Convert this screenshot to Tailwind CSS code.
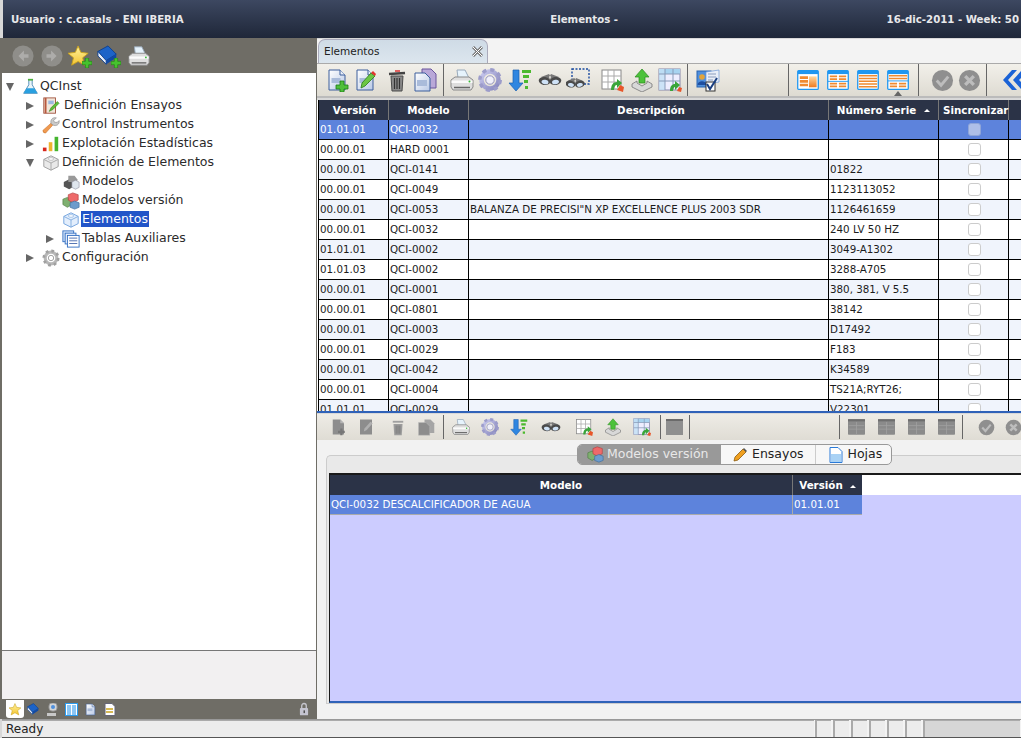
<!DOCTYPE html>
<html lang="en">
<head>
<meta charset="UTF-8">
<title>QCInst - Elementos</title>
<script src="https://cdn.jsdelivr.net/npm/@tailwindcss/browser@4"></script>
</head>
<body class="relative w-[1021px] h-[738px] overflow-hidden bg-[#d8d8d8] font-['DejaVu_Sans',sans-serif] text-[#222]">

<!-- shared icons, kept rendered (not display:none) so the gradients resolve -->
<svg class="absolute w-0 h-0" xmlns="http://www.w3.org/2000/svg">
  <defs>
    <linearGradient id="page" x1="0" y1="0" x2="1" y2="1"><stop offset="0" stop-color="#fff"/><stop offset="1" stop-color="#b9c9e6"/></linearGradient>
    <linearGradient id="orange" x1="0" y1="0" x2="0" y2="1"><stop offset="0" stop-color="#ffd9a0"/><stop offset="1" stop-color="#f07a20"/></linearGradient>
    <linearGradient id="lav" x1="0" y1="0" x2="1" y2="1"><stop offset="0" stop-color="#c9c9ee"/><stop offset="1" stop-color="#8686bc"/></linearGradient>
    <linearGradient id="gold" x1="0" y1="0" x2="0" y2="1"><stop offset="0" stop-color="#fff3a0"/><stop offset="1" stop-color="#f4c430"/></linearGradient>
    <symbol id="doc" viewBox="0 0 24 24"><path d="M4 2h11l5 5v15H4z" fill="url(#page)" stroke="#3c5f9c"/><path d="M15 2v5h5" fill="#e8eef8" stroke="#3c5f9c"/><rect x="6.500" y="10" width="9" height="5" fill="#a9bbda"/></symbol>
    <symbol id="docnew" viewBox="0 0 24 24"><use href="#doc"/><path d="M15 13h4v4h4v4h-4v3h-4v-3h-4v-4h4z" fill="#4fbf3a" stroke="#1d7d14" stroke-width=".8"/></symbol>
    <symbol id="docedit" viewBox="0 0 24 24"><use href="#doc"/><path d="M8 20l1-5L18 5l4 3-10 10z" fill="#6cc644" stroke="#2a7a18" stroke-width=".8"/><path d="M18 5l2-2 3 3-1 2z" fill="#e2342c"/></symbol>
    <symbol id="trash" viewBox="0 0 24 24"><path d="M4 6l16-1" stroke="#444" stroke-width="2.500"/><path d="M10 3h5" stroke="#d33" stroke-width="1.500"/><path d="M6 8h12l-1 15H7z" fill="#8a8a8a" stroke="#4a4a4a"/><path d="M9.500 10v11M12 10v11M14.500 10v11" stroke="#333" stroke-width="1.200"/></symbol>
    <symbol id="copy" viewBox="0 0 24 24"><path d="M9 1h9l5 5v14H9z" fill="#b9a8d8" stroke="#6b559c"/><path d="M2 5h10l5 5v13H2z" fill="url(#page)" stroke="#3c5f9c"/><rect x="4" y="12" width="10" height="6" fill="#a9bbda"/></symbol>
    <symbol id="gdoc" viewBox="0 0 24 24"><path d="M5 2h10l5 5v15H5z" fill="#8d8d8d"/><path d="M15 2v5h5z" fill="#b5b5b5"/><path d="M15 14h3v3h3v3h-3v3h-3v-3h-3v-3h3z" fill="#777"/></symbol>
    <symbol id="gedit" viewBox="0 0 24 24"><path d="M4 2h16v20H4z" fill="#8d8d8d"/><path d="M9 18l1-4 8-9 3 2-8 9z" fill="#b0b0b0"/></symbol>
    <symbol id="gtrash" viewBox="0 0 24 24"><path d="M5 5h14" stroke="#a0a0a0" stroke-width="2.500"/><path d="M6 8h12l-1 15H7z" fill="#9c9c9c"/><path d="M9.500 10v11M12 10v11M14.500 10v11" stroke="#777" stroke-width="1.200"/></symbol>
    <symbol id="gcopy" viewBox="0 0 24 24"><path d="M10 2h8l5 5v13H10z" fill="#a5a5a5"/><path d="M2 6h10l5 5v12H2z" fill="#8d8d8d" stroke="#bbb" stroke-width=".6"/></symbol>
    <symbol id="glay" viewBox="0 0 24 22"><rect width="24" height="22" rx="1" fill="#8b8b8b"/><rect width="24" height="3" fill="#6e6e6e"/><path d="M1 9h22M1 14h22M12 4v17" stroke="#a2a2a2"/></symbol>
    <symbol id="printer" viewBox="0 0 24 24"><path d="M7 2h8l4 8H8z" fill="#e6f3fc" stroke="#9ab"/><path d="M1 12l4-3h14l4 3v7l-2 3H3l-2-3z" fill="#dedede" stroke="#8a8a8a"/><path d="M1.500 12.500h21V15h-21z" fill="#fbfbfb"/><path d="M4 19.500h16" stroke="#666" stroke-width="1.500"/><circle cx="19.500" cy="13.500" r="1" fill="#3b3"/></symbol>
    <symbol id="gear" viewBox="0 0 24 24"><circle cx="12" cy="12" r="8.500" fill="none" stroke="url(#lav)" stroke-width="4.500"/><circle cx="12" cy="12" r="10.200" fill="none" stroke="#9c9cca" stroke-width="3.500" stroke-dasharray="4 4"/><circle cx="12" cy="12" r="4.200" fill="#f0f0fa" stroke="#8080b0" stroke-width=".8"/></symbol>
    <symbol id="sort" viewBox="0 0 24 24"><path d="M5 2h6v13h4l-7 8-7-8h4z" fill="#2f86e0" stroke="#1a5fb0" stroke-width=".7"/><path d="M14 2h9v3h-9zM15 7h6v3h-6zM16 12h4v3h-4zM17 18h3v3h-3z" fill="#4cb92f"/></symbol>
    <symbol id="binoc" viewBox="0 0 24 24"><path d="M3 9l8-3 2 3-2 5zM21 9l-8-3-2 3 2 5z" fill="#777"/><ellipse cx="6.500" cy="13" rx="5.800" ry="4" fill="#4a4a4a" transform="rotate(12 6.500 13)"/><ellipse cx="17.500" cy="13" rx="5.800" ry="4" fill="#4a4a4a" transform="rotate(-12 17.500 13)"/><ellipse cx="7" cy="14" rx="3.500" ry="2.200" fill="#cfe2f6" transform="rotate(12 7 14)"/><ellipse cx="17.500" cy="14" rx="3.500" ry="2.200" fill="#cfe2f6" transform="rotate(-12 17.500 14)"/></symbol>
    <symbol id="binocsel" viewBox="0 0 24 24"><rect x="6" y="1" width="17" height="15" fill="none" stroke="#1a4aa0" stroke-width="1.400" stroke-dasharray="2 1.500"/><g transform="translate(-1 5) scale(.85)"><use href="#binoc" width="24" height="24"/></g></symbol>
    <symbol id="grid" viewBox="0 0 24 24"><rect x="2" y="2" width="19" height="19" fill="#fff" stroke="#888"/><path d="M2 8h19M2 14h19M8 2v19M14 2v19" stroke="#aaa"/><path d="M11 22c0-5 2-8 6-8v-3l5 4-5 5v-3c-2 0-3 2-3 5z" fill="#3aa53a"/><path d="M17 22l3-5 4 2-1 5z" fill="#e8562a"/></symbol>
    <symbol id="grid2" viewBox="0 0 24 24"><rect x="1" y="1" width="21" height="21" fill="#eef" stroke="#88a"/><rect x="1" y="1" width="21" height="5" fill="#a7d3f0"/><rect x="1" y="1" width="6" height="21" fill="#c3e0f5" opacity=".8"/><path d="M1 6h21M1 13h21M7 1v21M15 1v21" stroke="#889bb8"/><path d="M12 23c0-5 2-7 5-7v-3l5 4-5 5v-3c-1 0-2 2-2 4z" fill="#3aa53a"/><path d="M19 23l2-4 3 1-1 4z" fill="#e8562a"/></symbol>
    <symbol id="upload" viewBox="0 0 24 24"><path d="M12 1l7 8h-4v6H9V9H5z" fill="#4cc23a" stroke="#2a8a1e" stroke-width=".7"/><path d="M2 16l5-3v2l5 3 5-3v-2l5 3v3l-10 5-10-5z" fill="#d8d8d8" stroke="#777" stroke-width=".8"/></symbol>
    <symbol id="usercheck" viewBox="0 0 24 24"><rect x="1" y="3" width="14" height="16" fill="#4f8fdc" stroke="#2a64b0"/><path d="M10 4l13-2v12l-13 2z" fill="#e8eef8" stroke="#6f9ad8" stroke-width=".7"/><path d="M12 6h8M12 9h8M12 12h5" stroke="#8a9cbc"/><circle cx="6" cy="9" r="2.800" fill="#e2a43a"/><path d="M1.500 17c0-5 9-5 9 0z" fill="#1f4fa0"/><rect x="10" y="14" width="9" height="9" fill="#fff" stroke="#333"/><path d="M11 16l3 5 7-11" fill="none" stroke="#1a3f80" stroke-width="2"/></symbol>
    <symbol id="lay1" viewBox="0 0 24 22"><rect x=".7" y=".7" width="22.600" height="20.600" rx="1" fill="#fff" stroke="#1f96f0" stroke-width="1.400"/><rect x="1" y="1" width="22" height="3.500" fill="#1f96f0"/><path d="M3 7h9v3H3zM3 11h9v3H3zM3 15h9v3H3z" fill="#f08a30"/><rect x="13" y="7" width="8.500" height="12" fill="url(#orange)"/></symbol>
    <symbol id="lay2" viewBox="0 0 24 22"><rect x=".7" y=".7" width="22.600" height="20.600" rx="1" fill="#fff" stroke="#1f96f0" stroke-width="1.400"/><rect x="1" y="1" width="22" height="3.500" fill="#1f96f0"/><path d="M3 6h8v2H3zM13 6h8v2h-8zM3 9h8v2H3zM13 9h8v2h-8z" fill="#f08a30"/><path d="M1 12.500h22" stroke="#1f96f0"/><path d="M3 14h8v2H3zM13 14h8v2h-8zM3 17h8v2H3zM13 17h8v2h-8z" fill="#f08a30"/></symbol>
    <symbol id="lay3" viewBox="0 0 24 22"><rect x=".7" y=".7" width="22.600" height="20.600" rx="1" fill="#fff" stroke="#1f96f0" stroke-width="1.400"/><rect x="1" y="1" width="22" height="3.500" fill="#1f96f0"/><path d="M2 5.500h20v1.700H2zM2 8.500h20v1.700H2zM2 11.500h20v1.700H2zM2 14.500h20v1.700H2zM2 17.500h20v1.700H2z" fill="#f08a30"/></symbol>
    <symbol id="lay4" viewBox="0 0 24 22"><rect x=".7" y=".7" width="22.600" height="20.600" rx="1" fill="#fff" stroke="#1f96f0" stroke-width="1.400"/><rect x="1" y="1" width="22" height="3.500" fill="#1f96f0"/><path d="M2 5.500h20v1.700H2zM2 8.500h20v1.700H2z" fill="#f08a30"/><path d="M1 12h22" stroke="#1f96f0"/><path d="M3 14h8v2H3zM13 14h8v2h-8zM3 17h8v2H3zM13 17h8v2h-8z" fill="#f08a30"/></symbol>
    <symbol id="ok" viewBox="0 0 24 24"><circle cx="12" cy="12" r="11" fill="#8f8f8f"/><path d="M6 12l4.500 5L18 8" fill="none" stroke="#bdbdbd" stroke-width="3"/></symbol>
    <symbol id="no" viewBox="0 0 24 24"><circle cx="12" cy="12" r="11" fill="#8f8f8f"/><path d="M7.500 7.500l9 9M16.500 7.500l-9 9" stroke="#bdbdbd" stroke-width="3.500"/></symbol>
    <symbol id="chev" viewBox="0 0 24 24"><path d="M11 2L2 12l9 10h5L7 12l9-10zM21 2l-9 10 9 10h3v-4l-6-6 6-6V2z" fill="#1a62d6"/></symbol>
    <symbol id="cube" viewBox="0 0 20 20"><path d="M10 2l8 4v8l-8 4-8-4V6z" fill="#e9e9e9" stroke="#9a9a9a"/><path d="M2 6l8 4 8-4M10 10v8" fill="none" stroke="#a5a5a5"/><ellipse cx="10" cy="5.500" rx="3" ry="1.500" fill="#fff" stroke="#aaa" stroke-width=".7"/></symbol>
    <symbol id="cubeblue" viewBox="0 0 20 20"><path d="M10 2l8 4v8l-8 4-8-4V6z" fill="#e3eefc" stroke="#6d9fdc"/><path d="M2 6l8 4 8-4M10 10v8" fill="none" stroke="#7fabdf"/><ellipse cx="10" cy="5.500" rx="3" ry="1.500" fill="#fff" stroke="#7fabdf" stroke-width=".7"/></symbol>
    <symbol id="cubes" viewBox="0 0 20 20"><path d="M1 8l5-2 5 2v6l-5 3-5-3z" fill="#7fb070" stroke="#4c7a40" stroke-width=".7"/><path d="M7 3l5-2 6 2v6l-6 3-5-3z" fill="#ee6a6a" stroke="#b03c3c" stroke-width=".7"/><path d="M9 12l5-2 5 2v5l-5 2-5-2z" fill="#6d9ccc" stroke="#3d6a9a" stroke-width=".7"/></symbol>
    <symbol id="flask" viewBox="0 0 20 20"><path d="M8 2h4v6l6 10H2L8 8z" fill="#eaf6fb" stroke="#3e7fb0"/><path d="M5.500 12h9l3.500 6H2z" fill="#29a0e0"/><path d="M7 2h6" stroke="#4cae3a" stroke-width="2"/></symbol>
    <symbol id="notebook" viewBox="0 0 20 20"><rect x="2" y="1" width="13" height="17" fill="#f2e6da" stroke="#a0523c"/><path d="M4 1v17" stroke="#b9573c" stroke-width="2"/><rect x="7" y="4" width="6" height="4" fill="#9db8e0"/><path d="M8 16l2-4 7-7 2 2-7 7z" fill="#5fbe34" stroke="#2c7a18" stroke-width=".6"/></symbol>
    <symbol id="wrench" viewBox="0 0 20 20"><path d="M1 16l9-8 2 2-8 9q-3 0-3-3z" fill="#f09a50" stroke="#c66a20" stroke-width=".6"/><path d="M10 8c-1-4 2-7 6-6l-3 3 1 2 3 0 2-2c1 4-3 7-7 5z" fill="#c9c9c9" stroke="#808080" stroke-width=".6"/></symbol>
    <symbol id="bars" viewBox="0 0 20 20"><rect x="1" y="14" width="4" height="4" fill="#d8261c"/><rect x="7.500" y="8" width="4" height="10" fill="#eeb32f"/><rect x="14" y="2" width="4" height="16" fill="#45b52e"/></symbol>
    <symbol id="treegear" viewBox="0 0 20 20"><circle cx="10" cy="10" r="6.500" fill="none" stroke="#b8b8b8" stroke-width="3.500"/><circle cx="10" cy="10" r="8" fill="none" stroke="#a0a0a0" stroke-width="3" stroke-dasharray="3 3.300"/><circle cx="10" cy="10" r="3" fill="#fff" stroke="#999"/></symbol>
    <symbol id="models" viewBox="0 0 20 20"><path d="M2 10l6-3 5 3v5l-5 3-6-3z" fill="#555"/><path d="M7 3h7l3 4v3H7z" fill="#999"/><path d="M11 10l4-2 4 2v6l-4 2-4-2z" fill="#dfe6ee" stroke="#889" stroke-width=".6"/></symbol>
    <symbol id="tables" viewBox="0 0 20 20"><rect x="1" y="1" width="12" height="12" fill="#d6e6fa" stroke="#2f6cc0"/><rect x="3.500" y="3.500" width="12" height="12" fill="#e7f0fc" stroke="#2f6cc0"/><rect x="6" y="6" width="13" height="13" fill="#fff" stroke="#2f6cc0"/><path d="M8 9h9M8 12h9M8 15h9" stroke="#46a" /></symbol>
    <symbol id="star" viewBox="0 0 24 24"><path d="M11 1l3 7 8 1-6 5 2 8-7-4-7 4 2-8-6-5 8-1z" fill="url(#gold)" stroke="#c9a21e"/></symbol>
    <symbol id="book" viewBox="0 0 24 24"><path d="M1 7l11-6 9 9-11 7z" fill="#1c63c8" stroke="#0c3f90"/><path d="M1 7v5l9 9v-4z" fill="#e8eef8" stroke="#0c3f90"/><path d="M10 17v4l11-7v-4z" fill="#0f4aa6"/></symbol>
    <symbol id="plus" viewBox="0 0 12 12"><path d="M4 0h4v4h4v4H8v4H4V8H0V4h4z" fill="#46c22e" stroke="#1f7d14" stroke-width=".7"/></symbol>
    <symbol id="arrowc" viewBox="0 0 24 24"><circle cx="12" cy="12" r="11.500" fill="#8f8e8a"/><path d="M13 6l-6 6 6 6v-4h5v-4h-5z" fill="#adacaa"/></symbol>
    <symbol id="arrowr" viewBox="0 0 24 24"><circle cx="12" cy="12" r="11.500" fill="#8f8e8a"/><path d="M11 6l6 6-6 6v-4H6v-4h5z" fill="#adacaa"/></symbol>
  </defs>
</svg>

<!-- title bar -->
<header class="h-[38px] ml-[3px] flex items-center justify-between pl-[8px] pr-[2px] pt-[1px] text-[10.2px] font-bold text-[#e8e8ea] bg-gradient-to-b from-[#3d4861] to-[#1f2739]">
  <span>Usuario : c.casals - ENI IBERIA</span>
  <span class="ml-[98px]">Elementos -</span>
  <span>16-dic-2011 - Week: 50</span>
</header>

<div class="h-[681px] flex">
  <!-- left navigator -->
  <aside class="w-[317px] pl-[2px] flex flex-col shrink-0 bg-[#6f6d66]">
    <div class="h-[34px] flex items-center pl-[10px] shrink-0 mt-[1px]">
      <svg class="w-[22px] h-[22px]"><use href="#arrowc"/></svg>
      <svg class="w-[22px] h-[22px] ml-[7px]"><use href="#arrowr"/></svg>
      <span class="relative w-[22px] h-[22px] ml-[5px]"><svg class="w-[22px] h-[22px]"><use href="#star"/></svg><svg class="absolute right-[-2px] bottom-[-1px] w-[10px] h-[10px]"><use href="#plus"/></svg></span>
      <span class="relative w-[22px] h-[22px] ml-[7px]"><svg class="w-[22px] h-[22px]"><use href="#book"/></svg><svg class="absolute right-[-2px] bottom-[-1px] w-[10px] h-[10px]"><use href="#plus"/></svg></span>
      <svg class="w-[22px] h-[22px] ml-[9px]"><use href="#printer"/></svg>
    </div>
    <nav class="flex-1 bg-white pt-[4px] text-[12.5px] text-[#2b2b2b] border-b border-[#777] mr-[1px]">
      <div class="h-[19px] flex items-center"><span class="w-0 h-0 ml-[4px] border-x-[4px] border-x-transparent border-t-[8px] border-t-[#666]"></span><svg class="w-[17px] h-[17px] ml-[8px]"><use href="#flask"/></svg><span class="ml-[1px]">QCInst</span></div>
      <div class="h-[19px] flex items-center"><span class="w-0 h-0 ml-[24px] border-y-[4px] border-y-transparent border-l-[8px] border-l-[#666]"></span><svg class="w-[18px] h-[18px] ml-[8px]"><use href="#notebook"/></svg><span class="ml-[4px]">Definición Ensayos</span></div>
      <div class="h-[19px] flex items-center"><span class="w-0 h-0 ml-[24px] border-y-[4px] border-y-transparent border-l-[8px] border-l-[#666]"></span><svg class="w-[18px] h-[18px] ml-[8px]"><use href="#wrench"/></svg><span class="ml-[2px]">Control Instrumentos</span></div>
      <div class="h-[19px] flex items-center"><span class="w-0 h-0 ml-[24px] border-y-[4px] border-y-transparent border-l-[8px] border-l-[#666]"></span><svg class="w-[18px] h-[18px] ml-[8px]"><use href="#bars"/></svg><span class="ml-[2px]">Explotación Estadísticas</span></div>
      <div class="h-[19px] flex items-center"><span class="w-0 h-0 ml-[24px] border-x-[4px] border-x-transparent border-t-[8px] border-t-[#666]"></span><svg class="w-[18px] h-[18px] ml-[8px]"><use href="#cube"/></svg><span class="ml-[2px]">Definición de Elementos</span></div>
      <div class="h-[19px] flex items-center pl-[60px]"><svg class="w-[18px] h-[18px]"><use href="#models"/></svg><span class="ml-[2px]">Modelos</span></div>
      <div class="h-[19px] flex items-center pl-[60px]"><svg class="w-[18px] h-[18px]"><use href="#cubes"/></svg><span class="ml-[2px]">Modelos versión</span></div>
      <div class="h-[19px] flex items-center pl-[60px]"><svg class="w-[18px] h-[18px]"><use href="#cubeblue"/></svg><span class="ml-[1px] mb-[1px] px-[1px] bg-[#2255c8] text-white leading-[16px]">Elementos</span></div>
      <div class="h-[19px] flex items-center"><span class="w-0 h-0 ml-[44px] border-y-[4px] border-y-transparent border-l-[8px] border-l-[#666]"></span><svg class="w-[18px] h-[18px] ml-[8px]"><use href="#tables"/></svg><span class="ml-[2px]">Tablas Auxiliares</span></div>
      <div class="h-[19px] flex items-center"><span class="w-0 h-0 ml-[24px] border-y-[4px] border-y-transparent border-l-[8px] border-l-[#666]"></span><svg class="w-[18px] h-[18px] ml-[8px]"><use href="#treegear"/></svg><span class="ml-[2px]">Configuración</span></div>
    </nav>
    <div class="h-[48px] shrink-0 bg-[#f2f0f1] mr-[1px]"></div>
    <div class="h-[20px] shrink-0 flex items-center pl-[4px] pr-[6px] mr-[1px]">
      <span class="w-[18px] h-[18px] flex items-center justify-center bg-white rounded-b-[3px]"><svg class="w-[13px] h-[13px]"><use href="#star"/></svg></span>
      <svg class="w-[13px] h-[13px] ml-[3px]"><use href="#book"/></svg>
      <svg class="w-[13px] h-[13px] ml-[6px]" viewBox="0 0 13 13"><rect x="3" y="0" width="8" height="8" rx="3" fill="#d4d4d4" stroke="#999"/><path d="M1 10h9v3H1z" fill="#c8c8c8"/><circle cx="7" cy="4" r="2" fill="#4f8fdc"/></svg>
      <svg class="w-[13px] h-[13px] ml-[6px]" viewBox="0 0 13 13"><rect x=".5" y=".5" width="12" height="12" fill="#fff" stroke="#2a9cf0"/><rect x="2" y="2" width="4" height="10" fill="#8cc6f5"/><rect x="7" y="2" width="4" height="10" fill="#8cc6f5"/></svg>
      <svg class="w-[13px] h-[13px] ml-[6px]"><use href="#doc"/></svg>
      <svg class="w-[13px] h-[13px] ml-[6px]" viewBox="0 0 13 13"><path d="M2 .5h7l3 3v9H2z" fill="#fff" stroke="#667"/><path d="M3 6h7M3 9h7" stroke="#c9a21e" stroke-width="1.500"/></svg>
      <svg class="w-[10px] h-[14px] ml-auto mr-[1px]" viewBox="0 0 11 14"><path d="M3 6V3.500a2.500 2.500 0 0 1 5 0V6" fill="none" stroke="#c4c4cc" stroke-width="1.500"/><rect x="1" y="6" width="9" height="8" rx="1" fill="#c4c4d0"/><rect x="5" y="8.500" width="1.500" height="3" fill="#444"/></svg>
    </div>
  </aside>

  <!-- main area -->
  <main class="flex-1 min-w-0 flex flex-col">
    <!-- document tab -->
    <div class="h-[25px] shrink-0 flex items-end pl-[1px] mt-[1px] bg-[#f3f3f3] border-b border-[#aaa]">
      <div class="w-[170px] h-[24px] flex items-center justify-between pl-[5px] pr-[4px] text-[10.5px] bg-gradient-to-b from-[#cfdbe6] to-[#dce6ee] border border-b-0 border-[#aab] rounded-t-[7px]">
        <span>Elementos</span>
        <svg class="w-[11px] h-[11px]" viewBox="0 0 11 11"><path d="M1 1l9 9M10 1l-9 9" stroke="#777" stroke-width="3"/><path d="M1 1l9 9M10 1l-9 9" stroke="#fff" stroke-width="1"/></svg>
      </div>
    </div>

    <!-- main toolbar -->
    <div class="h-[34px] shrink-0 flex items-center bg-gradient-to-b from-[#f2f0ea] to-[#dedbd2] border-b-2 border-[#bbb] overflow-hidden">
      <svg class="w-[24px] h-[24px] shrink-0 ml-[8px]"><use href="#docnew"/></svg>
      <svg class="w-[24px] h-[24px] shrink-0 ml-[4px]"><use href="#docedit"/></svg>
      <svg class="w-[24px] h-[24px] shrink-0 ml-[8px]"><use href="#trash"/></svg>
      <svg class="w-[24px] h-[24px] shrink-0 ml-[4px]"><use href="#copy"/></svg>
      <span class="w-px h-[32px] shrink-0 bg-[#666] ml-[6px]"></span>
      <svg class="w-[24px] h-[24px] shrink-0 ml-[6px]"><use href="#printer"/></svg>
      <svg class="w-[24px] h-[24px] shrink-0 ml-[4px]"><use href="#gear"/></svg>
      <svg class="w-[24px] h-[24px] shrink-0 ml-[6px]"><use href="#sort"/></svg>
      <svg class="w-[24px] h-[24px] shrink-0 ml-[6px]"><use href="#binoc"/></svg>
      <svg class="w-[24px] h-[24px] shrink-0 ml-[4px]"><use href="#binocsel"/></svg>
      <svg class="w-[24px] h-[24px] shrink-0 ml-[10px]"><use href="#grid"/></svg>
      <svg class="w-[24px] h-[24px] shrink-0 ml-[6px]"><use href="#upload"/></svg>
      <svg class="w-[24px] h-[24px] shrink-0 ml-[4px]"><use href="#grid2"/></svg>
      <span class="w-px h-[32px] shrink-0 bg-[#666] ml-[5px]"></span>
      <svg class="w-[24px] h-[24px] shrink-0 ml-[8px]"><use href="#usercheck"/></svg>
      <span class="w-px h-[32px] shrink-0 bg-[#666] ml-[68px]"></span>
      <svg class="w-[22px] h-[20px] shrink-0 ml-[8px]"><use href="#lay1"/></svg>
      <svg class="w-[22px] h-[20px] shrink-0 ml-[8px]"><use href="#lay2"/></svg>
      <svg class="w-[22px] h-[20px] shrink-0 ml-[8px]"><use href="#lay3"/></svg>
      <span class="relative w-[22px] h-[20px] shrink-0 ml-[8px]"><svg class="w-[22px] h-[20px]"><use href="#lay4"/></svg><span class="absolute left-[7px] top-[21px] w-0 h-0 border-x-[4px] border-x-transparent border-b-[5px] border-b-[#666]"></span></span>
      <span class="w-px h-[32px] shrink-0 bg-[#666] ml-[9px]"></span>
      <svg class="w-[23px] h-[23px] shrink-0 ml-[12px]"><use href="#ok"/></svg>
      <svg class="w-[23px] h-[23px] shrink-0 ml-[4px]"><use href="#no"/></svg>
      <span class="w-px h-[32px] shrink-0 bg-[#666] ml-[5px]"></span>
      <svg class="w-[24px] h-[24px] shrink-0 ml-[14px]"><use href="#chev"/></svg>
    </div>

    <!-- elementos table -->
    <div class="h-[313px] shrink-0 mt-[2px] pl-[1px] overflow-hidden bg-white border-b-2 border-[#2f62b8]">
      <table class="w-[703px] table-fixed border-separate border-spacing-0 text-[10.3px] leading-[19px] text-[#1c1c1c]">
        <colgroup><col class="w-[71px]"><col class="w-[80px]"><col class="w-[360px]"><col class="w-[110px]"><col class="w-[70px]"><col class="w-[12px]"></colgroup>
        <thead class="bg-[#2b3347] text-white font-bold">
          <tr class="h-[20px]">
            <th class="p-0 border-l border-l-black border-r border-r-[#777]"><span class="pl-[2px]">Versión</span></th>
            <th class="p-0 border-r border-[#777]">Modelo</th>
            <th class="p-0 border-r border-[#777]"><span class="pl-[5px]">Descripción</span></th>
            <th class="p-0 border-r border-[#777]"><span>Número Serie</span><span class="inline-block w-0 h-0 ml-[8px] mb-[2px] border-x-[3px] border-x-transparent border-b-[3px] border-b-white"></span></th>
            <th class="p-0 border-r border-[#777]"><span class="pl-[4px]">Sincronizar</span></th>
            <th class="p-0"></th>
          </tr>
        </thead>
        <tbody id="rows"></tbody>
      </table>
    </div>

    <!-- detail toolbar -->
    <div class="h-[26px] shrink-0 mt-[1px] flex items-center bg-gradient-to-b from-[#eeece6] to-[#dfdcd4] overflow-hidden">
      <svg class="w-[18px] h-[18px] shrink-0 ml-[12px]"><use href="#gdoc"/></svg>
      <svg class="w-[18px] h-[18px] shrink-0 ml-[10px]"><use href="#gedit"/></svg>
      <svg class="w-[18px] h-[18px] shrink-0 ml-[14px]"><use href="#gtrash"/></svg>
      <svg class="w-[18px] h-[18px] shrink-0 ml-[10px]"><use href="#gcopy"/></svg>
      <span class="w-px h-[24px] shrink-0 bg-[#666] ml-[8px]"></span>
      <svg class="w-[18px] h-[18px] shrink-0 ml-[8px]"><use href="#printer"/></svg>
      <svg class="w-[18px] h-[18px] shrink-0 ml-[11px]"><use href="#gear"/></svg>
      <svg class="w-[18px] h-[18px] shrink-0 ml-[11px]"><use href="#sort"/></svg>
      <svg class="w-[20px] h-[20px] shrink-0 ml-[13px]"><use href="#binoc"/></svg>
      <svg class="w-[18px] h-[18px] shrink-0 ml-[14px]"><use href="#grid"/></svg>
      <svg class="w-[18px] h-[18px] shrink-0 ml-[11px]"><use href="#upload"/></svg>
      <svg class="w-[18px] h-[18px] shrink-0 ml-[11px]"><use href="#grid2"/></svg>
      <span class="w-px h-[24px] shrink-0 bg-[#666] ml-[9px]"></span>
      <span class="w-[17px] h-[16px] shrink-0 ml-[5px] bg-[#8f8f8f] border-t-2 border-[#6a6a6a]"></span>
      <span class="w-px h-[24px] shrink-0 bg-[#666] ml-[6px]"></span>
      <span class="w-px h-[24px] shrink-0 bg-[#666] ml-[149px]"></span>
      <svg class="w-[17px] h-[16px] shrink-0 ml-[8px]"><use href="#glay"/></svg>
      <svg class="w-[17px] h-[16px] shrink-0 ml-[13px]"><use href="#glay"/></svg>
      <svg class="w-[17px] h-[16px] shrink-0 ml-[13px]"><use href="#glay"/></svg>
      <svg class="w-[17px] h-[16px] shrink-0 ml-[13px]"><use href="#glay"/></svg>
      <span class="w-px h-[24px] shrink-0 bg-[#666] ml-[7px]"></span>
      <svg class="w-[17px] h-[17px] shrink-0 ml-[15px]"><use href="#ok"/></svg>
      <svg class="w-[17px] h-[17px] shrink-0 ml-[10px]"><use href="#no"/></svg>
    </div>

    <!-- detail panel -->
    <section class="relative flex-1 bg-[#f2f2f2] pt-[15px] pl-[9px] pb-[15px]">
      <div class="h-full pt-[17px] pl-[2px] bg-[#e9e9e9] border border-r-0 border-[#ccc] rounded-tl-[5px]">
        <div class="h-full flex flex-col border-t-2 border-l border-[#1a1a1a] border-b-2 border-b-[#2f62b8] bg-[#ccccff]">
          <div class="h-[20px] shrink-0 flex bg-white text-[10.3px] font-bold text-white">
            <div class="w-[463px] pt-[2px] flex items-center justify-center bg-[#2b3347] border-r border-[#777]">Modelo</div>
            <div class="w-[69px] pt-[2px] flex items-center justify-center gap-[7px] bg-[#2b3347]">Versión<span class="w-0 h-0 border-x-[3px] border-x-transparent border-b-[3px] border-b-white"></span></div>
          </div>
          <div class="h-[20px] w-[532px] shrink-0 flex items-center text-[10.3px] text-white bg-[#5d83dc] border-b border-[#aaa]">
            <div class="w-[463px] pl-[1px] border-r border-[#aaa] leading-[19px]">QCI-0032 DESCALCIFICADOR DE AGUA</div>
            <div class="pl-[1px]">01.01.01</div>
          </div>
        </div>
      </div>
      <!-- segmented tabs sit over the panel edge -->
      <div class="absolute left-[260px] top-[4px] h-[21px] flex items-center text-[12.5px] bg-[#f7f7f7] border border-[#999] rounded-[5px] overflow-hidden">
        <span class="h-full w-[143px] flex items-center pl-[9px] gap-[3px] bg-[#999] text-[#e8e8e8]"><svg class="w-[17px] h-[17px]"><use href="#cubes"/></svg>Modelos versión</span>
        <span class="h-full flex items-center pl-[12px] pr-[11px] gap-[4px] border-r border-[#ccc]"><svg class="w-[15px] h-[15px]" viewBox="0 0 15 15"><path d="M1 14l1-4 8-8 3 3-8 8z" fill="#f0a020" stroke="#8a5a10" stroke-width=".8"/><path d="M10 2l1-1 3 3-1 1z" fill="#555"/></svg>Ensayos</span>
        <span class="h-full flex items-center pl-[13px] pr-[9px] gap-[5px]"><svg class="w-[14px] h-[16px]" viewBox="0 0 14 16"><path d="M1 .5h8l4 4v11H1z" fill="#fff" stroke="#2a7ad8"/><path d="M2 7h10v8H2z" fill="#a9d2f5"/></svg>Hojas</span>
      </div>
    </section>
  </main>
</div>

<!-- status bar -->
<footer class="h-[19px] ml-[2px] flex bg-[#f3f3f3] border-t border-[#999] border-b border-b-[#555] text-[12px]">
  <div class="w-[812px] pl-[4px] leading-[16px] bg-[#ececec] border-t border-[#aaa]">Ready</div>
  <div class="flex gap-[2px] ml-[1px]">
    <span class="w-[16px] bg-[#ececec] border-l-2 border-t border-[#aaa]"></span>
    <span class="w-[16px] bg-[#ececec] border-l-2 border-t border-[#aaa]"></span>
    <span class="w-[16px] bg-[#ececec] border-l-2 border-t border-[#aaa]"></span>
    <span class="w-[16px] bg-[#ececec] border-l-2 border-t border-[#aaa]"></span>
    <span class="w-[16px] bg-[#ececec] border-l-2 border-t border-[#aaa]"></span>
    <span class="w-[16px] bg-[#ececec] border-l-2 border-t border-[#aaa]"></span>
    <span class="w-[97px] bg-[#d6d6d6] border-l-2 border-t border-[#aaa]"></span>
  </div>
</footer>

<script>
  // rows of the elementos grid
  const data = [
    ['01.01.01', 'QCI-0032', '', ''],
    ['00.00.01', 'HARD 0001', '', ''],
    ['00.00.01', 'QCI-0141', '', '01822'],
    ['00.00.01', 'QCI-0049', '', '1123113052'],
    ['00.00.01', 'QCI-0053', 'BALANZA DE PRECISI"N XP EXCELLENCE PLUS 2003 SDR', '1126461659'],
    ['00.00.01', 'QCI-0032', '', '240 LV 50 HZ'],
    ['01.01.01', 'QCI-0002', '', '3049-A1302'],
    ['01.01.03', 'QCI-0002', '', '3288-A705'],
    ['00.00.01', 'QCI-0001', '', '380, 381, V 5.5'],
    ['00.00.01', 'QCI-0801', '', '38142'],
    ['00.00.01', 'QCI-0003', '', 'D17492'],
    ['00.00.01', 'QCI-0029', '', 'F183'],
    ['00.00.01', 'QCI-0042', '', 'K34589'],
    ['00.00.01', 'QCI-0004', '', 'TS21A;RYT26;'],
    ['01.01.01', 'QCI-0029', '', 'V22301'],
  ];
  const td = 'h-[20px] p-0 pl-[1px] border-r border-b border-black whitespace-nowrap overflow-hidden';
  document.getElementById('rows').innerHTML = data.map((r, i) => {
    const bg = i === 0 ? 'bg-[#5d83dc] text-white' : i % 2 ? 'bg-white' : 'bg-[#f0f4fc]';
    const box = i === 0 ? 'bg-[#aebfe8] border-[#8fa5d8]' : 'bg-white border-[#ccc]';
    return `<tr class="${bg}">
      <td class="${td} border-l">${r[0]}</td><td class="${td}">${r[1]}</td><td class="${td}">${r[2]}</td><td class="${td}">${r[3]}</td>
      <td class="${td}"><span class="block w-[13px] h-[13px] mx-auto rounded-[3px] border ${box}"></span></td><td class="h-[20px] p-0 border-b border-black"></td>
    </tr>`;
  }).join('');
</script>
</body>
</html>
